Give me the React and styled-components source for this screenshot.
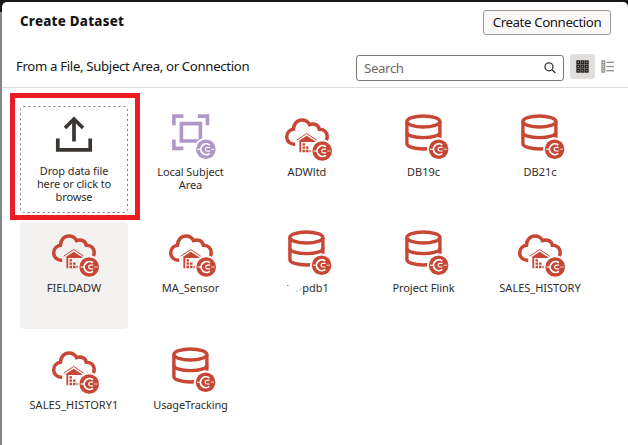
import React from 'react';
import styled, { createGlobalStyle } from 'styled-components';

const GlobalStyle = createGlobalStyle`
  * { box-sizing: border-box; }
  html, body, #root { height: 100%; }
  body {
    margin: 0;
    overflow: hidden;
    background: #8b8b8b;
    font-family: "Noto Sans", "Open Sans", sans-serif;
    color: #161513;
  }
  button, input { font-family: inherit; }
`;

const Page = styled.div`
  height: 445px;
  padding: 2px 0 0 2px;
  background: linear-gradient(#1a1816 0 12px, #858585 12px 100%);
`;

const Dialog = styled.main`
  height: 443px;
  display: flex;
  flex-direction: column;
  background: #fff;
  border-radius: 5px 5px 0 0;
`;

const Header = styled.header`
  height: 40px;
  flex: none;
  display: flex;
  align-items: center;
  justify-content: space-between;
  padding: 0 17px 0 18px;
`;

const Title = styled.h1`
  margin: -2px 0 0;
  font-size: 13.3px;
  line-height: 20px;
  font-weight: 800;
  letter-spacing: 0.25px;
  white-space: nowrap;
`;

const ConnectionButton = styled.button`
  width: 128px;
  height: 25px;
  flex: none;
  padding: 0;
  border: 1px solid #9b9895;
  border-radius: 3px;
  background: #fbf9f8;
  color: #161513;
  font-size: 13.3px;
  line-height: 22px;
  letter-spacing: -0.41px;
  white-space: nowrap;
`;

const Toolbar = styled.div`
  height: 46px;
  flex: none;
  display: flex;
  align-items: center;
  padding: 4px 8px 0 14px;
  border-bottom: 1px solid #dedddc;
`;

const Subtitle = styled.h2`
  flex: 1;
  margin: -1px 0 0;
  font-size: 13.2px;
  line-height: 20px;
  font-weight: 400;
  letter-spacing: -0.33px;
  white-space: nowrap;
`;

const SearchBox = styled.label`
  width: 208px;
  height: 26px;
  display: flex;
  align-items: center;
  padding: 0 6px 0 7px;
  margin: 3px 6px 0 0;
  border: 1px solid #7d7975;
  border-radius: 3px;
`;

const SearchInput = styled.input`
  flex: 1;
  min-width: 0;
  padding: 0;
  border: 0;
  outline: 0;
  background: none;
  font-size: 13.3px;
  letter-spacing: -0.4px;
  &::placeholder { color: #6f6c69; opacity: 1; }
`;

const ViewButton = styled.button`
  width: 25px;
  height: 25px;
  padding: 0;
  border: 0;
  border-radius: 3px;
  display: flex;
  align-items: center;
  justify-content: center;
  background: ${(p) => (p.$active ? '#e1dfdc' : 'transparent')};
`;

const Grid = styled.section`
  display: grid;
  grid-template-columns: repeat(5, 108px);
  grid-template-rows: 106.4px 107px 106px;
  gap: 9.8px 8.5px;
  padding: 18px 0 0 18px;
`;

const Tile = styled.div`
  display: flex;
  flex-direction: column;
  align-items: center;
  padding-top: 6px;
  border-radius: 4px;
  background: ${(p) => (p.$selected ? '#f4f2f1' : 'transparent')};
`;

const TileIcon = styled.svg`
  display: block;
  flex: none;
  width: 52px;
  height: 52px;
`;

const Label = styled.span`
  margin-top: ${(p) => (p.$raised ? 0 : 1)}px;
  font-size: 11px;
  line-height: 13px;
  letter-spacing: ${(p) => p.$spacing || 0}px;
  text-align: center;
  white-space: pre-line;
  color: #312d2a;
`;

const DropFrame = styled.div`
  margin: -13px -12px -8px -10px;
  height: 127px;
  border: 5px solid #ed1c24;
  padding: 8px 7px 0 5px;
`;

const DropTile = styled(Tile)`
  position: relative;
  height: 107px;
`;

const DropOutline = styled.svg`
  position: absolute;
  inset: 0;
`;

const FadedName = styled.svg`
  display: inline-block;
  width: 18px;
  height: 7px;
  margin-left: -1px;
  vertical-align: baseline;
`;

const RED = '#c74634';

function Badge({ cx, cy, color, ring = '#fff' }) {
  return (
    <g transform={`translate(${cx} ${cy})`}>
      <circle r="11.6" fill={ring} />
      <circle r="9.8" fill={color} />
      <path d="M3.7-4.2A5.4 5.4 0 1 0 3.7 4.2" fill="none" stroke="#fff" strokeWidth="1.8" />
      <path d="M-8.6 0H-5" stroke="#fff" strokeWidth="1.1" />
      <path d="M4-1.8H1.3a1.8 1.8 0 0 0 0 3.6H4" fill="none" stroke="#fff" strokeWidth="1.2" />
      <path d="M5 0H8.6" stroke="#fff" strokeWidth="0.8" />
    </g>
  );
}

function DatabaseIcon() {
  return (
    <TileIcon viewBox="0 0 52 52">
      <g fill="none" stroke={RED} strokeWidth="3.4">
        <ellipse cx="25.4" cy="9.5" rx="16.5" ry="5.5" />
        <path d="M8.9 9.5V31.5C8.9 34.8 16.1 37 25.4 37S41.9 34.8 41.9 31.5V9.5" />
        <path d="M8.9 20.2C8.9 23.5 16.1 25.6 25.4 25.6S41.9 23.5 41.9 20.2" />
      </g>
      <Badge cx={40.6} cy={37.2} color={RED} />
    </TileIcon>
  );
}

function CloudIcon({ ring }) {
  return (
    <TileIcon viewBox="0 0 52 52">
      <path
        d="M14.2 32.3C9 32.6 5.7 29.2 5.7 24.8C5.7 20.8 8.7 17.6 12.5 17.2C12.6 11.7 16.3 8 21 8C24.3 8 27.2 9.8 28.5 12.6C33.2 10.9 37.4 13 38.3 17.2C43.2 17.2 46.2 20.4 46.2 24.6C46.2 26 45.9 27.1 45.3 28.2"
        fill="none" stroke={RED} strokeWidth="3.5"
      />
      <path d="M15.7 28.2L25.7 21.5L35.8 28.2" fill="none" stroke={RED} strokeWidth="1" />
      <path d="M17.4 29.2L25.7 23.8L34.2 29.2V30H20.2V40.2H18.4V29.2z" fill={RED} />
      <path d="M21.5 31.2h2.5v2.3h-2.5zM21.5 34.5h2.5v2.3h-2.5zM25 34.5h2.5v2.3H25zM21.5 37.8h2.5v2.4h-2.5zM25 37.8h2.5v2.4H25zM28.5 37.8H31v2.4h-2.5z" fill={RED} />
      <Badge cx={41.2} cy={39} color={RED} ring={ring} />
    </TileIcon>
  );
}

function SubjectIcon() {
  return (
    <TileIcon viewBox="0 0 52 52">
      <g fill="none" stroke="#af98c8" strokeWidth="3.6">
        <path d="M8.9 13.3V4.1H18.4M32.9 4.1H42.4V13.3M8.9 27.5V36.4H18.4" />
        <path d="M16.4 11.6H35.4V29H16.4z" />
      </g>
      <Badge cx={40.9} cy={37.3} color="#af98c8" />
    </TileIcon>
  );
}

function UploadIcon() {
  return (
    <TileIcon viewBox="0 0 52 52">
      <g fill="none" stroke="#3a3632" strokeWidth="3.7">
        <path d="M26 29.5V6.5M17 16L26 7L35 16" />
        <path d="M9.8 26.5V37.8H42.2V26.5" />
      </g>
    </TileIcon>
  );
}

const connections = [
  { name: 'Local Subject\nArea', Icon: SubjectIcon, spacing: -0.08 },
  { name: 'ADWltd', Icon: CloudIcon },
  { name: 'DB19c', Icon: DatabaseIcon },
  { name: 'DB21c', Icon: DatabaseIcon },
  { name: 'FIELDADW', Icon: CloudIcon, selected: true },
  { name: 'MA_Sensor', Icon: CloudIcon },
  { name: 'pdb1', Icon: DatabaseIcon, faded: true },
  { name: 'Project Flink', Icon: DatabaseIcon, spacing: -0.05 },
  { name: 'SALES_HISTORY', Icon: CloudIcon },
  { name: 'SALES_HISTORY1', Icon: CloudIcon, spacing: 0.1 },
  { name: 'UsageTracking', Icon: DatabaseIcon, spacing: -0.12 },
];

export default function App() {
  return (
    <>
      <GlobalStyle />
      <Page>
        <Dialog>
          <Header>
            <Title>Create Dataset</Title>
            <ConnectionButton>Create Connection</ConnectionButton>
          </Header>
          <Toolbar>
            <Subtitle>From a File, Subject Area, or Connection</Subtitle>
            <SearchBox>
              <SearchInput placeholder="Search" />
              <svg width="14" height="14" viewBox="0 0 14 14" fill="none" stroke="#3a3632" strokeWidth="1.3">
                <circle cx="6" cy="5.8" r="4" />
                <path d="M9 8.8L12.4 12" />
              </svg>
            </SearchBox>
            <ViewButton $active aria-label="Grid view">
              <svg width="13" height="13" viewBox="0 0 13 13" fill="#aaa7a3" stroke="#24211e" strokeWidth="1.4">
                {[1, 5.2, 9.4].map((x) => [1, 5.2, 9.4].map((y) => <rect key={`${x}-${y}`} x={x} y={y} width="2.6" height="2.6" />))}
              </svg>
            </ViewButton>
            <ViewButton aria-label="List view">
              <svg width="13" height="13" viewBox="0 0 13 13" fill="none" stroke="#96928f" strokeWidth="1.4">
                {[1, 5.2, 9.4].map((y) => <g key={y}><rect x="1" y={y} width="2.6" height="2.6" /><path d={`M5.5 ${y + 1.3}H13`} /></g>)}
              </svg>
            </ViewButton>
          </Toolbar>
          <Grid>
            <DropFrame>
              <DropTile>
                <DropOutline width="108" height="107">
                  <rect x="0.5" y="0.5" width="107" height="106" rx="3" fill="none" stroke="#7b7772" strokeDasharray="2 3" />
                </DropOutline>
                <UploadIcon />
                <Label $raised $spacing={-0.12}>{'Drop data file\nhere or click to\nbrowse'}</Label>
              </DropTile>
            </DropFrame>
            {connections.map(({ name, Icon, selected, spacing, faded }) => (
              <Tile key={name} $selected={selected}>
                <Icon ring={selected ? '#faf9f8' : '#fff'} />
                <Label $spacing={spacing}>
                  {faded && (
                    <FadedName viewBox="0 0 18 7">
                      <path d="M3 0.5H4.5" stroke="#8a7a72" />
                      <path d="M12 6.3H14M15.5 6.3L17.5 3" stroke="#a9c9e6" />
                    </FadedName>
                  )}
                  {name}
                </Label>
              </Tile>
            ))}
          </Grid>
        </Dialog>
      </Page>
    </>
  );
}
